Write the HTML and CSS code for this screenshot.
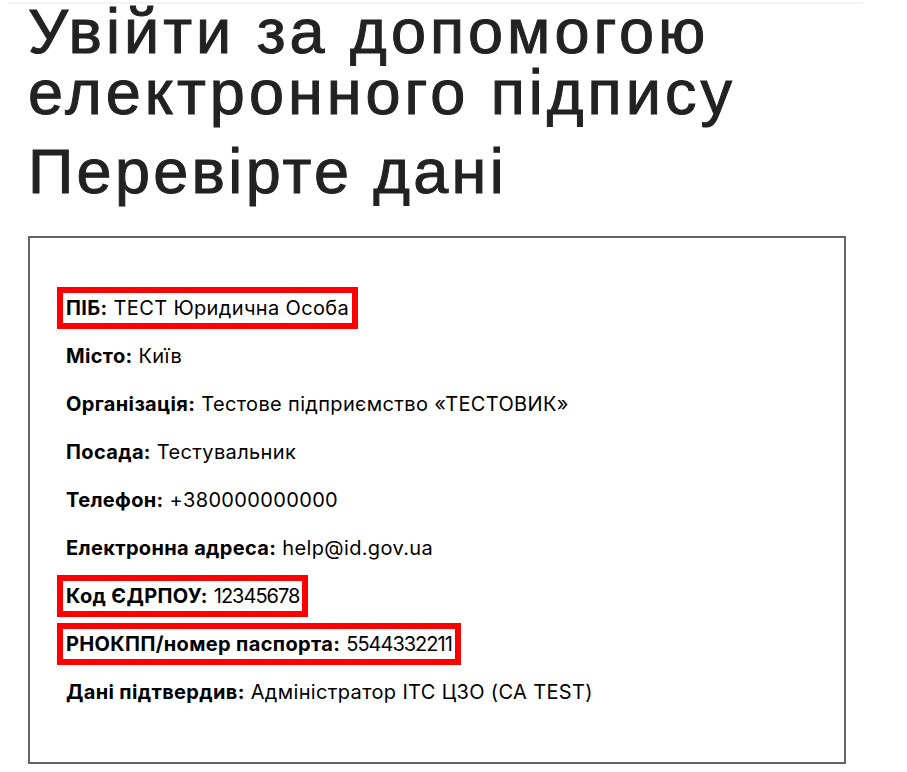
FILE: index.html
```html
<!DOCTYPE html>
<html lang="uk">
<head>
<meta charset="utf-8">
<title>Увійти за допомогою електронного підпису</title>
<link rel="stylesheet" href="styles.css">
</head>
<body>
<div class="page">
  <div class="topline"></div>
  <div class="content">
    <h1 class="title">Увійти за допомогою електронного підпису</h1>
    <h2 class="subtitle">Перевірте дані</h2>
    <div class="card">
      <div class="row"><span class="item mark"><b>ПІБ:</b> ТЕСТ Юридична Особа</span></div>
      <div class="row"><span class="item"><b>Місто:</b> Київ</span></div>
      <div class="row"><span class="item"><b>Організація:</b> Тестове підприємство «ТЕСТОВИК»</span></div>
      <div class="row"><span class="item"><b>Посада:</b> Тестувальник</span></div>
      <div class="row"><span class="item"><b>Телефон:</b> +380000000000</span></div>
      <div class="row"><span class="item"><b>Електронна адреса:</b> help@id.gov.ua</span></div>
      <div class="row"><span class="item mark"><b>Код ЄДРПОУ:</b> <span class="num">12345678</span></span></div>
      <div class="row"><span class="item mark"><b>РНОКПП/номер паспорта:</b> <span class="num">5544332211</span></span></div>
      <div class="row"><span class="item"><b>Дані підтвердив:</b> Адміністратор ІТС ЦЗО (CA TEST)</span></div>
    </div>
  </div>
</div>
</body>
</html>
```

FILE: styles.css
```css
html, body {
  margin: 0;
  padding: 0;
  background: #ffffff;
}

.page {
  margin-left: 8px;
  width: 855px;
  padding-top: 2px;
}

.topline {
  height: 2px;
  background: #f3f3f3;
}

.content {
  padding-left: 20px;
  padding-right: 17px;
}

.title,
.subtitle {
  font-family: "Liberation Sans", Arial, sans-serif;
  font-weight: 400;
  font-size: 63px;
  line-height: 61px;
  letter-spacing: 4px;
  color: #222222;
  -webkit-text-stroke: 1px #222222;
}

.title {
  margin: -3px 0 0 0;
}

.subtitle {
  margin: 18px 0 0 0;
  letter-spacing: 3.3px;
}

.card {
  margin-top: 34px;
  border: 2px solid #666666;
  padding: 49px 0 49px 27px;
  display: flex;
  flex-direction: column;
  gap: 6px;
  font-family: Inter, "Noto Sans", sans-serif;
  font-size: 20px;
  letter-spacing: 0.35px;
  color: #000000;
}

.row {
  display: flex;
}

.item {
  border: 6px solid transparent;
  padding: 0 3px;
  line-height: 30px;
}

.item b {
  font-weight: 700;
}

.num {
  letter-spacing: -1px;
}

.mark {
  border-color: #ff0000;
}
```
